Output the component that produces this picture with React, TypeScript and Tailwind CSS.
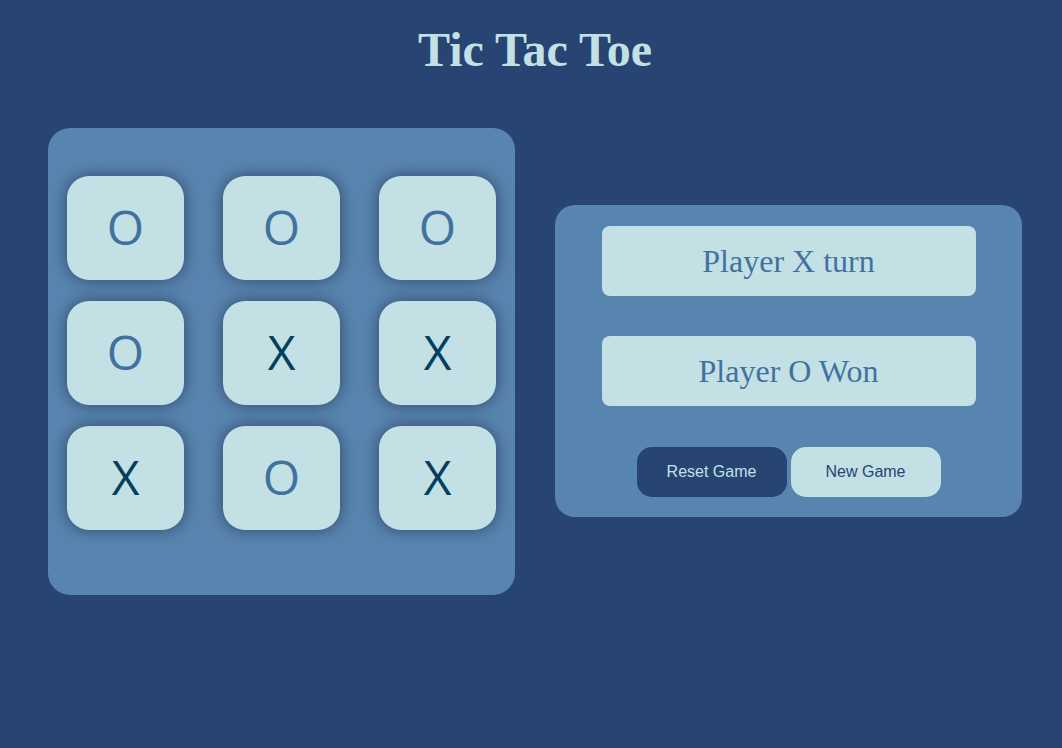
const board = ["O", "O", "O", "O", "X", "X", "X", "O", "X"];

function Cell({ value }: { value: string }) {
  return (
    <div className="flex h-[104px] w-[117px] items-center justify-center rounded-[22px] bg-[#c3e0e5] shadow-[0_0_16px_rgba(20,30,60,0.6)]">
      <span
        className={`-mt-[3px] font-['Open_Sans',sans-serif] text-[48px] font-normal leading-none ${
          value === "X" ? "text-[#053f5e]" : "text-[#41729f]"
        }`}
      >
        {value}
      </span>
    </div>
  );
}

export default function App() {
  return (
    <div className="min-h-[748px] w-full bg-[#274472]">
      <h1 className="pt-[22px] pl-[8px] text-center font-['Liberation_Serif',serif] text-[48px] font-bold leading-[56px] text-[#c3e0e5]">
        Tic Tac Toe
      </h1>

      <div className="mt-[50px] flex items-center gap-[40px] pl-[48px]">
        <div className="grid h-[467px] w-[467px] grid-cols-3 content-start gap-x-[39px] gap-y-[21px] rounded-[22px] bg-[#5885af] px-[19px] pt-[48px]">
          {board.map((v, i) => (
            <Cell key={i} value={v} />
          ))}
        </div>

        <div className="-mt-[2px] flex w-[467px] flex-col items-center rounded-[20px] bg-[#5885af] pt-[21px] pb-[20px]">
          <div className="flex h-[70px] w-[374px] items-center justify-center rounded-[8px] bg-[#c3e0e5] font-['Liberation_Serif',serif] text-[32px] text-[#41729f]">
            Player X turn
          </div>
          <div className="mt-[40px] flex h-[70px] w-[374px] items-center justify-center rounded-[8px] bg-[#c3e0e5] font-['Liberation_Serif',serif] text-[32px] text-[#41729f]">
            Player O Won
          </div>
          <div className="mt-[41px] flex gap-[4px]">
            <button className="h-[50px] w-[150px] rounded-[15px] bg-[#274472] font-['Liberation_Sans',sans-serif] text-[16px] text-[#c3e0e5]">
              Reset Game
            </button>
            <button className="h-[50px] w-[150px] rounded-[15px] bg-[#c3e0e5] font-['Liberation_Sans',sans-serif] text-[16px] text-[#274472]">
              New Game
            </button>
          </div>
        </div>
      </div>
    </div>
  );
}
